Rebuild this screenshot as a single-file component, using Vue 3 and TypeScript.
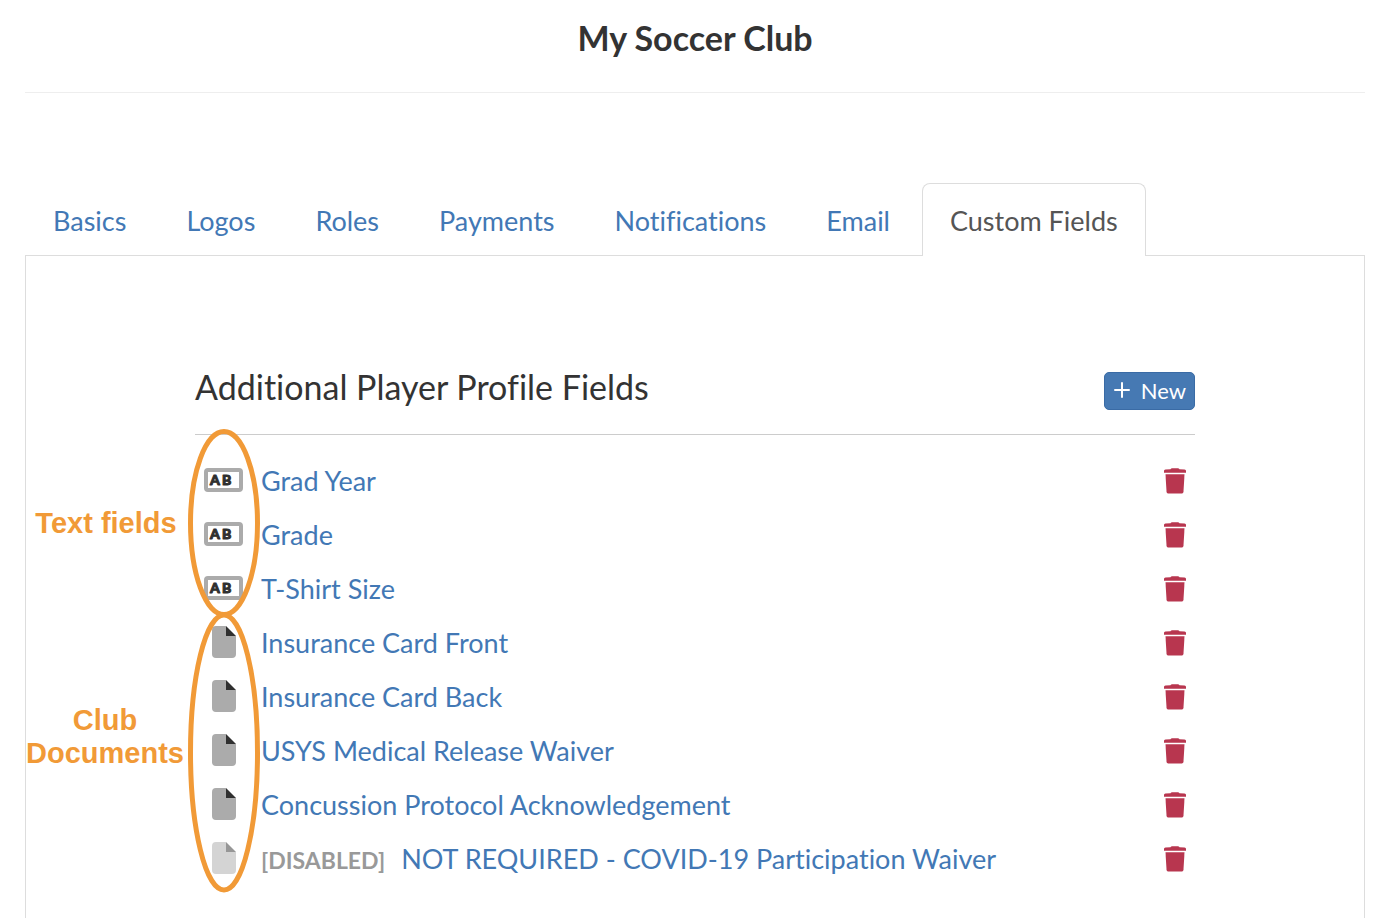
<script setup lang="ts">
import { ref } from 'vue'

type Field = { name: string; kind: 'text' | 'document'; disabled?: boolean }

const tabs: string[] = ['Basics', 'Logos', 'Roles', 'Payments', 'Notifications', 'Email', 'Custom Fields']
const active = ref('Custom Fields')

const fields = ref<Field[]>([
  { name: 'Grad Year', kind: 'text' },
  { name: 'Grade', kind: 'text' },
  { name: 'T-Shirt Size', kind: 'text' },
  { name: 'Insurance Card Front', kind: 'document' },
  { name: 'Insurance Card Back', kind: 'document' },
  { name: 'USYS Medical Release Waiver', kind: 'document' },
  { name: 'Concussion Protocol Acknowledgement', kind: 'document' },
  { name: 'NOT REQUIRED - COVID-19 Participation Waiver', kind: 'document', disabled: true },
])

function removeField(field: Field) {
  fields.value = fields.value.filter((f) => f !== field)
}
</script>

<template>
  <div class="page">
    <header class="page-head">
      <h1>My Soccer Club</h1>
    </header>

    <nav class="tabs">
      <a
        v-for="tab in tabs"
        :key="tab"
        href="#"
        class="tab"
        :class="{ active: tab === active }"
        @click.prevent="active = tab"
      >{{ tab }}</a>
    </nav>

    <main class="panel">
      <section class="content">
        <div class="section-head">
          <h2>Additional Player Profile Fields</h2>
          <button type="button" class="new-btn">
            <svg width="16" height="16" viewBox="0 0 16 16" aria-hidden="true">
              <path d="M8 1V15M1 8H15" stroke="#fff" stroke-width="2" stroke-linecap="round" />
            </svg>
            New
          </button>
        </div>

        <div class="list-area">
          <ul class="fields">
            <li v-for="field in fields" :key="field.name">
              <span class="icon" :class="{ faded: field.disabled }">
                <svg v-if="field.kind === 'text'" width="39" height="24" viewBox="0 0 39 24" aria-hidden="true">
                  <rect x="2" y="2" width="35" height="20" rx="2" fill="#fff" stroke="#ababab" stroke-width="4" />
                  <text x="6 18" y="17" class="ab">AB</text>
                </svg>
                <svg v-else width="24" height="32" viewBox="0 0 24 32" aria-hidden="true">
                  <path d="M4 0H14V10H24V28A4 4 0 0 1 20 32H4A4 4 0 0 1 0 28V4A4 4 0 0 1 4 0Z" fill="#ababab" />
                  <path d="M14 0L24 10H14Z" fill="#2f2f2f" />
                </svg>
              </span>
              <strong v-if="field.disabled" class="flag">[DISABLED]</strong>
              <a href="#" @click.prevent>{{ field.name }}</a>
              <button type="button" class="trash" :aria-label="`Delete ${field.name}`" @click="removeField(field)">
                <svg width="22" height="26" viewBox="0 0 22 26" aria-hidden="true">
                  <path
                    d="M1.5 1.6L6.5 1.3C7 .5 7.6 .2 8.4 .2H13.6C14.4 .2 15 .5 15.5 1.3L20.5 1.6C21.5 1.7 22 2.3 22 3.2V4.8H0V3.2C0 2.3 .5 1.7 1.5 1.6Z"
                    fill="#b8364f"
                  />
                  <path d="M1.5 6.2H20.5L19.5 23.4C19.4 24.8 18.6 25.5 17.3 25.5H4.7C3.4 25.5 2.6 24.8 2.5 23.4Z" fill="#b8364f" />
                </svg>
              </button>
            </li>
          </ul>

          <svg class="rings" width="76" height="466" viewBox="0 0 76 466" aria-hidden="true">
            <g fill="none" stroke="#f19a37" stroke-width="5">
              <ellipse cx="38" cy="96" rx="33.5" ry="91.5" />
              <ellipse cx="38" cy="325.5" rx="33.5" ry="137.5" />
            </g>
          </svg>
          <p class="note note-text">Text fields</p>
          <p class="note note-docs">Club Documents</p>
        </div>
      </section>
    </main>
  </div>
</template>

<style>
body {
  background: #fff;
}
</style>

<style scoped>
.page {
  box-sizing: border-box;
  height: 100vh;
  overflow: hidden;
  display: flex;
  flex-direction: column;
  padding: 0 19px 0 25px;
  font-family: Lato, "Liberation Sans", sans-serif;
  font-size: 27px;
  line-height: 36px;
  font-variant-ligatures: none;
  color: #333;
}

.page-head {
  flex: none;
  padding: 18px 0 34px;
  border-bottom: 1px solid #eee;
  text-align: center;
}

h1 {
  margin: 0;
  font-size: 34px;
  line-height: 40px;
  font-weight: 700;
}

.tabs {
  flex: none;
  display: flex;
  gap: 4px;
  margin-top: 90px;
}

a {
  color: #4278b5;
  text-decoration: none;
}

.tab {
  padding: 19px 27px 16px;
  border: 1px solid transparent;
  border-bottom: 0;
  border-radius: 8px 8px 0 0;
  white-space: nowrap;
}

.tab.active {
  position: relative;
  margin-bottom: -1px;
  padding-bottom: 17px;
  border-color: #ddd;
  background: #fff;
  color: #555;
}

.panel {
  flex: 1;
  border: 1px solid #ddd;
  border-bottom: 0;
  padding-top: 111px;
}

.content {
  max-width: 1000px;
  margin: 0 auto;
}

.section-head {
  display: flex;
  align-items: flex-start;
  justify-content: space-between;
  padding-bottom: 24px;
  border-bottom: 1px solid #ccc;
}

h2 {
  margin: 0;
  font-size: 34px;
  line-height: 40px;
  font-weight: 400;
}

.new-btn {
  display: flex;
  align-items: center;
  gap: 11px;
  height: 38px;
  margin-top: 5px;
  padding: 0 8px 2px 9px;
  border: 1px solid #3a6ba5;
  border-radius: 5px;
  background: #4679b3;
  color: #fff;
  font: 22px Lato, "Liberation Sans", sans-serif;
}

.list-area {
  position: relative;
  padding-top: 19px;
}

.fields {
  list-style: none;
  margin: 0;
  padding: 0;
}

.fields li {
  display: flex;
  align-items: center;
  height: 54px;
}

.icon {
  display: flex;
  justify-content: center;
  width: 57px;
  margin-right: 9px;
}

.icon svg {
  margin-bottom: 2px;
}

.faded {
  opacity: 0.5;
}

.ab {
  font: 900 14px Lato, "Liberation Sans", sans-serif;
  fill: #2f2f2f;
  stroke: #2f2f2f;
  stroke-width: 1px;
  stroke-linejoin: round;
}

.flag {
  margin-right: 16px;
  padding-top: 2px;
  font-size: 23px;
  color: #999;
}

.trash {
  display: flex;
  margin-left: auto;
  padding: 0;
  border: 0;
  margin-right: 9px;
  background: none;
}

.rings {
  position: absolute;
  left: -9px;
  top: -8px;
  pointer-events: none;
}

.note {
  position: absolute;
  margin: 0;
  width: 160px;
  font: 700 29px/33px "Liberation Sans", Arial, sans-serif;
  text-align: center;
  color: #f19a37;
}

.note-text {
  left: -169px;
  top: 72px;
}

.note-docs {
  left: -170px;
  top: 269px;
}
</style>
